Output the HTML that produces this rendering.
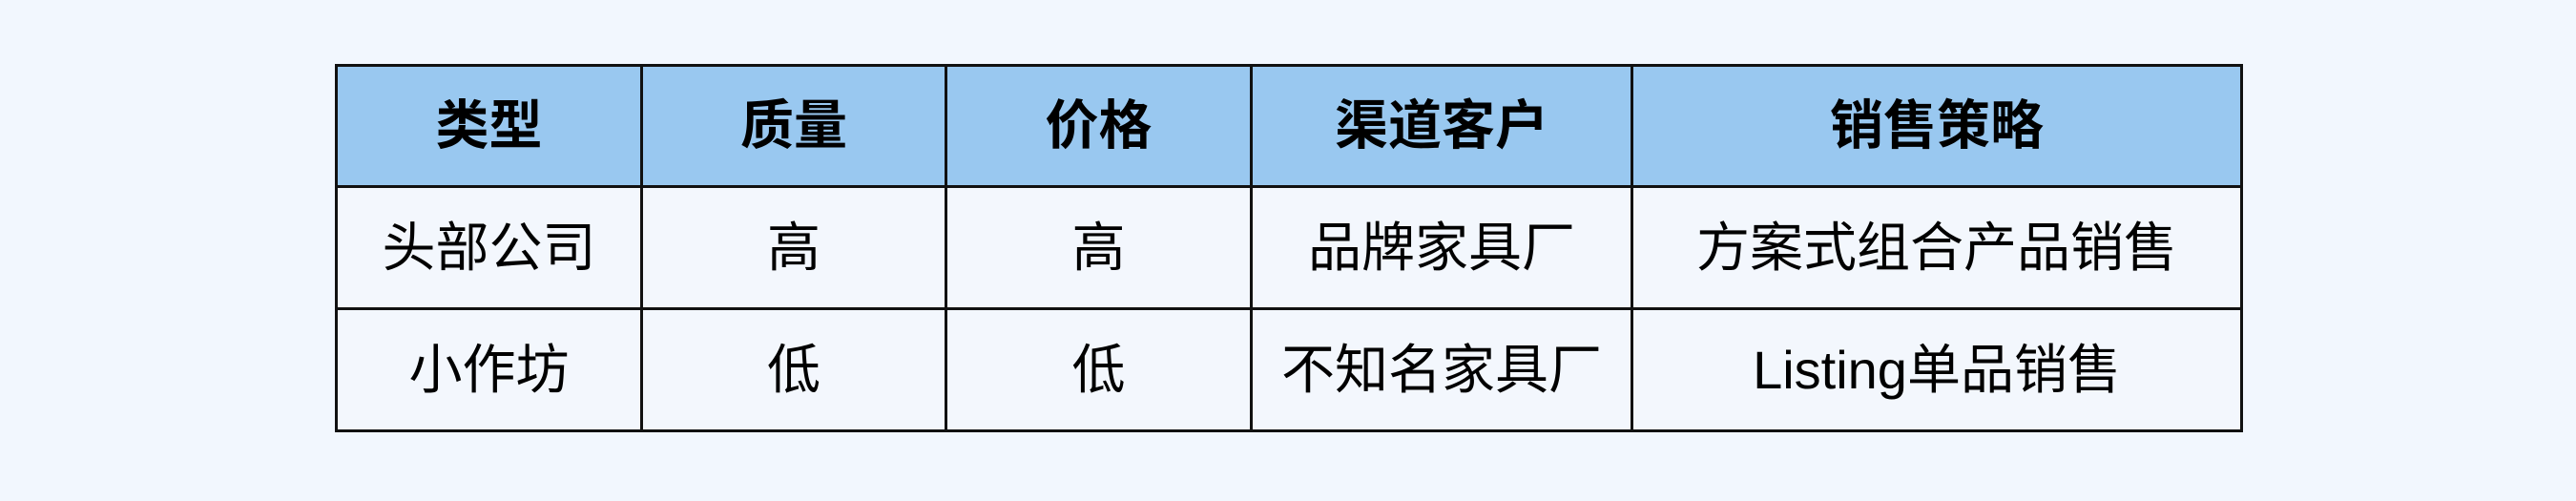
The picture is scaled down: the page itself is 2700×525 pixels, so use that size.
<!DOCTYPE html>
<html><head><meta charset="utf-8"><style>
html,body{margin:0;padding:0;}
body{width:2700px;height:525px;background:#f2f7fe;position:relative;overflow:hidden;font-family:"Liberation Sans","Noto Sans CJK SC",sans-serif;}
table{position:absolute;left:351px;top:67px;border-collapse:collapse;table-layout:fixed;}
td,th{border:3px solid #111;text-align:center;font-size:56px;color:#000;padding:0;line-height:1;}
th{background:#99c8f0;font-weight:bold;height:124px;}
td{background:#f3f7fd;font-weight:normal;height:125px;}
</style></head><body>
<table>
<colgroup><col style="width:320px"><col style="width:319px"><col style="width:320px"><col style="width:399px"><col style="width:639px"></colgroup>
<tr><th>类型</th><th>质量</th><th>价格</th><th>渠道客户</th><th>销售策略</th></tr>
<tr><td>头部公司</td><td>高</td><td>高</td><td>品牌家具厂</td><td>方案式组合产品销售</td></tr>
<tr><td>小作坊</td><td>低</td><td>低</td><td>不知名家具厂</td><td>Listing单品销售</td></tr>
</table>
</body></html>
